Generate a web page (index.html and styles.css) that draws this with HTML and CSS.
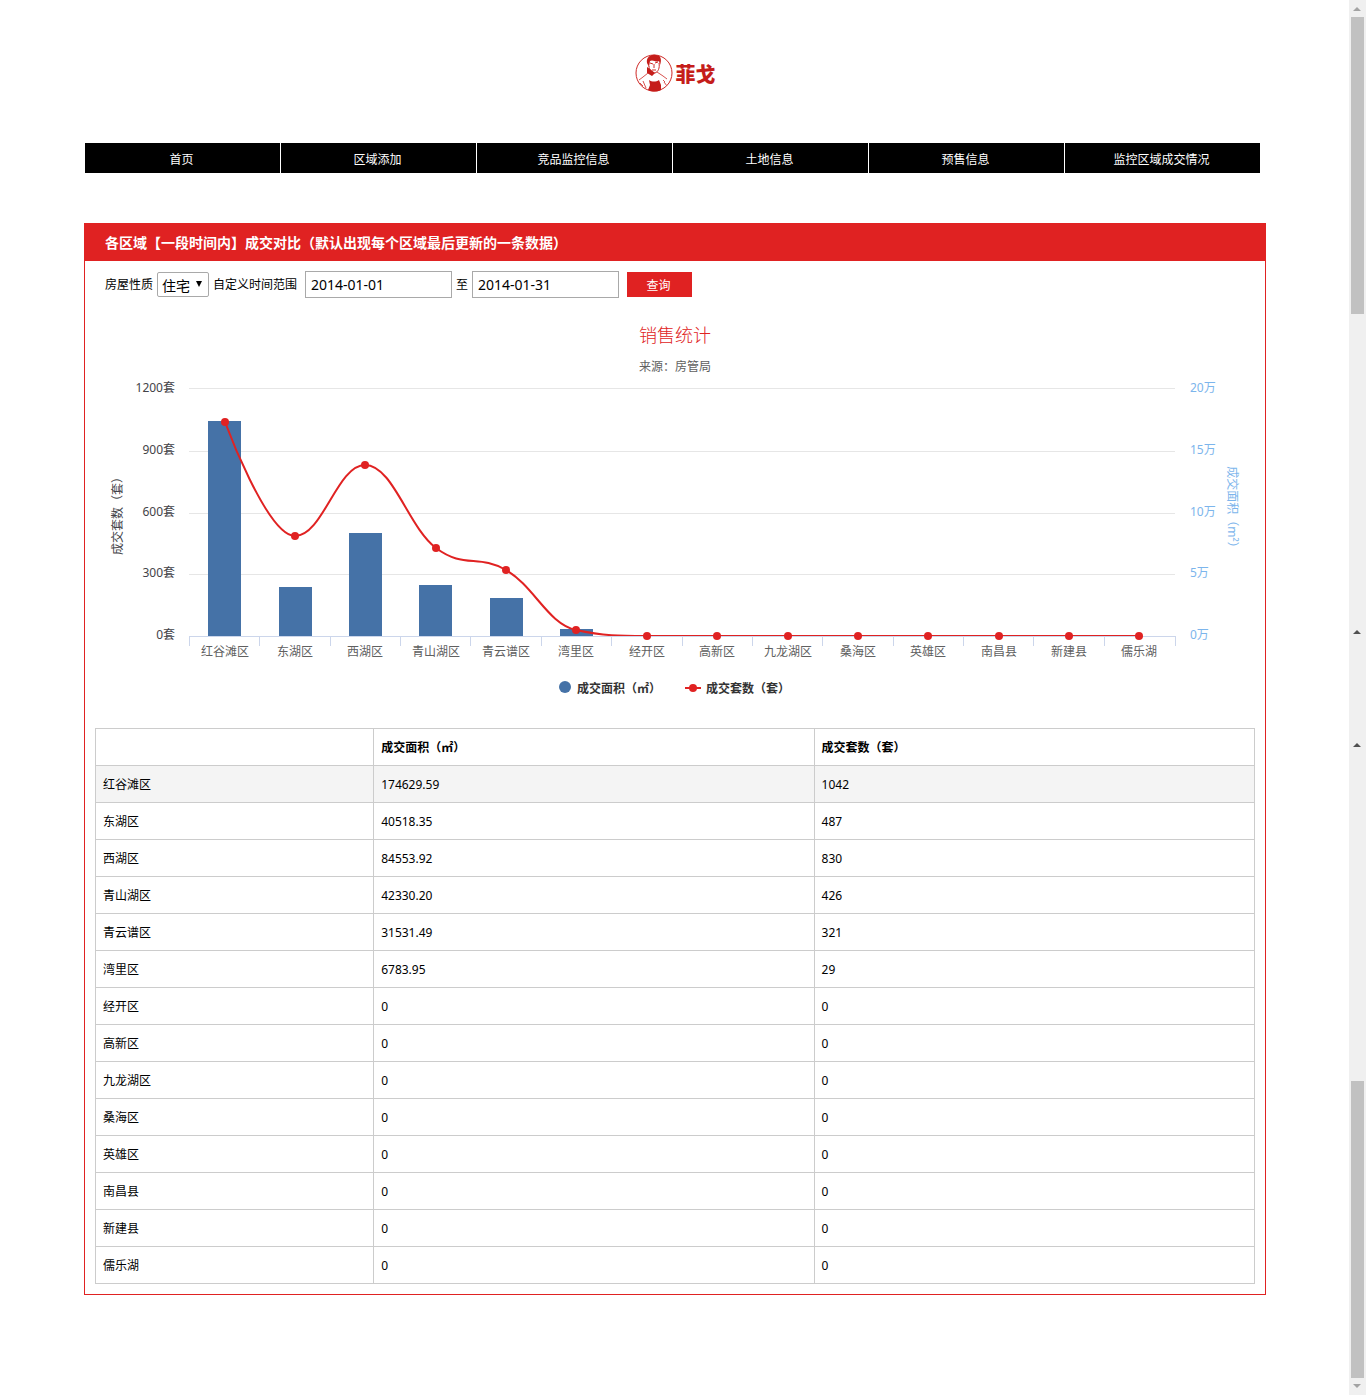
FILE: index.html
```html
<!DOCTYPE html>
<html lang="zh-CN">
<head>
<meta charset="utf-8">
<meta name="viewport" content="width=device-width, initial-scale=1">
<title>菲戈</title>
<link rel="stylesheet" href="styles.css">
</head>
<body>
<main class="page">
  <header class="brand">
    <svg class="brand-mark" viewBox="0 0 38 38" aria-hidden="true">
      <circle cx="19" cy="19" r="18" fill="none" stroke="#cf2a27" stroke-width="1"/>
      <path d="M12 9C11 3 16 0 21 1C26 1 27 6 25 11L24 7C21 9 18 5 15 7L14 13Z" fill="#c51d1a"/>
      <path d="M15 9l3 1M20 9l3-1M19 10v4M17 16h4M24 9c1 5-1 9-4 10-3 0-6-3-6-7" fill="none" stroke="#cf2a27" stroke-width="1"/>
      <path d="M12 13L15 15L20 19L17 22L12 19ZM14 26C17 28 21 28 24 26L26 31L26 36C22 38 17 38 13 36L15 31Z" fill="#c51d1a"/>
      <path d="M13 19L8 23L4 26M22 18L28 22L32 25M29 28l3 4M8 27l3 7M5 29l3 3M28 26l2 2" fill="none" stroke="#d8524f" stroke-width="1"/>
    </svg>
    <span class="brand-name">菲戈</span>
  </header>

  <nav class="menu">
    <a href="#">首页</a>
    <a href="#">区域添加</a>
    <a href="#">竞品监控信息</a>
    <a href="#">土地信息</a>
    <a href="#">预售信息</a>
    <a href="#">监控区域成交情况</a>
  </nav>

  <section class="panel">
    <h1 class="panel-title">各区域【一段时间内】成交对比（默认出现每个区域最后更新的一条数据）</h1>
    <form class="filter">
      <label for="kind">房屋性质</label>
      <span class="select"><select id="kind"><option>住宅</option></select></span>
      <label class="range-label" for="from">自定义时间范围</label>
      <input id="from" type="text" value="2014-01-01">
      <label for="to">至</label>
      <input id="to" type="text" value="2014-01-31">
      <button type="button">查询</button>
    </form>

    <svg class="chart" viewBox="95 318 1160 400" role="img" aria-label="销售统计">
      <text class="chart-title" x="675" y="342">销售统计</text>
      <text class="chart-source" x="675" y="371">来源：房管局</text>
      <path class="grid" d="M189 388.5H1175M189 451.5H1175M189 513.5H1175M189 574.5H1175"/>
      <g class="bars">
        <rect x="208" y="421" width="33" height="215"/>
        <rect x="279" y="587" width="33" height="49"/>
        <rect x="349" y="533" width="33" height="103"/>
        <rect x="419" y="585" width="33" height="51"/>
        <rect x="490" y="598" width="33" height="38"/>
        <rect x="560" y="629" width="33" height="7"/>
      </g>
      <path class="line" d="M225 422C225 422 267 536 295 536C323 536 337 465 365 465C393 465 408 527 436 548C464 569 478 554 506 570C534 586 548 624 576 630C604 636 619 636 647 636H1139"/>
      <path class="axis" d="M189 636.5H1176M189.5 636V646M259.5 636V646M330.5 636V646M400.5 636V646M470.5 636V646M541.5 636V646M611.5 636V646M682.5 636V646M752.5 636V646M822.5 636V646M893.5 636V646M963.5 636V646M1033.5 636V646M1104.5 636V646M1175.5 636V646"/>
      <g class="dots">
        <circle cx="225" cy="422" r="4"/><circle cx="295" cy="536" r="4"/><circle cx="365" cy="465" r="4"/>
        <circle cx="436" cy="548" r="4"/><circle cx="506" cy="570" r="4"/><circle cx="576" cy="630" r="4"/>
        <circle cx="647" cy="636" r="4"/><circle cx="717" cy="636" r="4"/><circle cx="788" cy="636" r="4"/>
        <circle cx="858" cy="636" r="4"/><circle cx="928" cy="636" r="4"/><circle cx="999" cy="636" r="4"/>
        <circle cx="1069" cy="636" r="4"/><circle cx="1139" cy="636" r="4"/>
      </g>
      <g class="left-labels">
        <text x="175" y="392">1200套</text><text x="175" y="454">900套</text><text x="175" y="516">600套</text>
        <text x="175" y="577">300套</text><text x="175" y="639">0套</text>
      </g>
      <g class="right-labels">
        <text x="1190" y="392">20万</text><text x="1190" y="454">15万</text><text x="1190" y="516">10万</text>
        <text x="1190" y="577">5万</text><text x="1190" y="639">0万</text>
      </g>
      <text class="left-name" transform="translate(122 513) rotate(-90)">成交套数（套）</text>
      <text class="right-name" transform="translate(1228 510) rotate(90)">成交面积（m²）</text>
      <g class="x-labels">
        <text x="225" y="656">红谷滩区</text><text x="295" y="656">东湖区</text><text x="365" y="656">西湖区</text>
        <text x="436" y="656">青山湖区</text><text x="506" y="656">青云谱区</text><text x="576" y="656">湾里区</text>
        <text x="647" y="656">经开区</text><text x="717" y="656">高新区</text><text x="788" y="656">九龙湖区</text>
        <text x="858" y="656">桑海区</text><text x="928" y="656">英雄区</text><text x="999" y="656">南昌县</text>
        <text x="1069" y="656">新建县</text><text x="1139" y="656">儒乐湖</text>
      </g>
      <circle cx="565" cy="687" r="6" fill="#4572a7"/>
      <text class="legend" x="577" y="693">成交面积（㎡）</text>
      <path class="line" d="M685 688H701"/>
      <circle cx="693" cy="688" r="4" fill="#e02222"/>
      <text class="legend" x="706" y="693">成交套数（套）</text>
    </svg>

    <table class="data">
      <thead><tr><th></th><th>成交面积（㎡）</th><th>成交套数（套）</th></tr></thead>
      <tbody>
        <tr class="active"><td>红谷滩区</td><td>174629.59</td><td>1042</td></tr>
        <tr><td>东湖区</td><td>40518.35</td><td>487</td></tr>
        <tr><td>西湖区</td><td>84553.92</td><td>830</td></tr>
        <tr><td>青山湖区</td><td>42330.20</td><td>426</td></tr>
        <tr><td>青云谱区</td><td>31531.49</td><td>321</td></tr>
        <tr><td>湾里区</td><td>6783.95</td><td>29</td></tr>
        <tr><td>经开区</td><td>0</td><td>0</td></tr>
        <tr><td>高新区</td><td>0</td><td>0</td></tr>
        <tr><td>九龙湖区</td><td>0</td><td>0</td></tr>
        <tr><td>桑海区</td><td>0</td><td>0</td></tr>
        <tr><td>英雄区</td><td>0</td><td>0</td></tr>
        <tr><td>南昌县</td><td>0</td><td>0</td></tr>
        <tr><td>新建县</td><td>0</td><td>0</td></tr>
        <tr><td>儒乐湖</td><td>0</td><td>0</td></tr>
      </tbody>
    </table>
  </section>
</main>

<aside class="scroll" aria-hidden="true">
  <svg class="arrow" viewBox="0 0 17 17"><path d="M4 11h8L8 7z" fill="#a3a3a3"/></svg>
  <span class="thumb"></span>
  <span class="track-upper"></span>
  <svg class="arrow" viewBox="0 0 17 17"><path d="M4 11h8L8 7z" fill="#505050"/></svg>
  <span class="track-middle"></span>
  <svg class="arrow" viewBox="0 0 17 17"><path d="M4 11h8L8 7z" fill="#505050"/></svg>
  <span class="track-lower"></span>
  <span class="thumb"></span>
  <svg class="arrow" viewBox="0 0 17 17"><path d="M4 6h8L8 10z" fill="#a3a3a3"/></svg>
</aside>
</body>
</html>
```
FILE: styles.css
```css
* { box-sizing: border-box; }

body {
  margin: 0;
  display: flex;
  min-height: 100vh;
  background: #fff;
  color: #000;
  font: 12px/18px "Noto Sans", "Noto Sans CJK SC", sans-serif;
}

.page {
  flex: 1;
  min-width: 0;
  padding: 53px 83px 100px 84px;
}

.brand {
  display: flex;
  justify-content: center;
  align-items: center;
  gap: 3px;
  height: 40px;
}
.brand-mark { width: 38px; height: 38px; }
.brand-name {
  padding-top: 3px;
  color: #c51d1a;
  font-size: 20px;
  font-weight: 900;
  line-height: 40px;
}

.menu {
  display: flex;
  gap: 1px;
  margin: 50px 6px 50px 1px;
}
.menu a {
  flex: 1;
  height: 30px;
  padding-right: 2px;
  background: #000;
  color: #fff;
  line-height: 33px;
  text-align: center;
  text-decoration: none;
}

.panel {
  border: 1px solid #e02222;
  padding-bottom: 10px;
}
.panel-title {
  margin: 0;
  padding: 0 20px;
  background: #e02222;
  color: #fff;
  font-size: 14px;
  font-weight: 700;
  line-height: 37px;
}

.filter {
  display: flex;
  align-items: center;
  gap: 4px;
  padding: 10px 20px 20px;
  white-space: nowrap;
}
.filter .range-label { margin-right: 4px; }
.filter input {
  width: 147px;
  height: 27px;
  padding: 0 5px;
  border: 1px solid #a9a9a9;
  font: 14px/20px "Noto Sans", sans-serif;
}
.filter button {
  width: 65px;
  height: 25px;
  margin-left: 4px;
  padding: 2px 2px 0 0;
  border: 0;
  background: #e02222;
  color: #fff;
  font: inherit;
}
.select { position: relative; }
.select select {
  appearance: none;
  display: block;
  width: 52px;
  height: 25px;
  padding: 0 4px;
  border: 1px solid #a9a9a9;
  border-radius: 2px;
  background: #fff;
  color: #000;
  font: 14px/20px "Noto Sans CJK SC", sans-serif;
}
.select::after {
  content: "";
  position: absolute;
  top: 9px;
  right: 7px;
  border: solid transparent;
  border-width: 6px 3px 0;
  border-top-color: #000;
}

.chart { display: block; width: 100%; padding: 0 10px; }
.chart text { font-size: 12px; text-anchor: middle; fill: #606060; }
.chart .chart-title { font-size: 18px; font-weight: 300; fill: #e02222; }
.chart .left-labels text { text-anchor: end; fill: #434348; }
.chart .right-labels text { text-anchor: start; fill: #7cb5ec; }
.chart .left-name { fill: #434348; }
.chart .right-name { fill: #7cb5ec; }
.chart .legend { text-anchor: start; font-weight: 700; fill: #333; }
.grid { stroke: #e6e6e6; }
.axis { fill: none; stroke: #ccd6eb; }
.bars { fill: #4572a7; }
.line { fill: none; stroke: #e02222; stroke-width: 2; }
.dots { fill: #e02222; }

.data {
  width: calc(100% - 20px);
  margin: 10px 10px 0;
  border-collapse: collapse;
  table-layout: fixed;
}
.data th,
.data td {
  width: 38%;
  height: 37px;
  padding: 2px 7px 0;
  border: 1px solid #ccc;
  text-align: left;
}
.data th:first-child { width: 24%; }
.data .active { background: #f4f4f4; }

.scroll {
  display: flex;
  flex-direction: column;
  flex: none;
  width: 17px;
  background: #f0f0f0;
}
.arrow { flex: none; width: 17px; height: 17px; }
.thumb { flex: none; height: 297px; margin: 0 2px; background: #c1c1c1; }
.track-upper { flex: 16; }
.track-middle { flex: 5; }
.track-lower { flex: 17; }
```
